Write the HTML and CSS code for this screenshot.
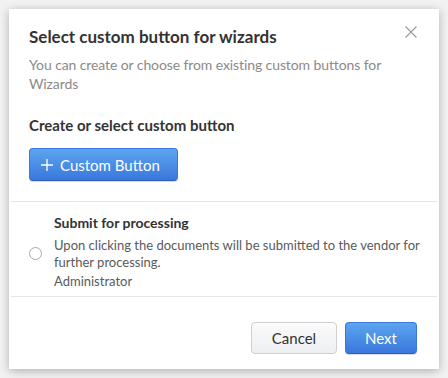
FILE: index.html
```html
<!DOCTYPE html>
<html lang="en">
<head>
    <meta charset="UTF-8">
    <title>Select custom button for wizards</title>
    <link rel="stylesheet" href="styles.css">
</head>
<body>

<div class="dialog">
    <div class="dialog-head">
        <h2>Select custom button for wizards</h2>
        <button class="close-btn" aria-label="Close">
            <svg width="12" height="12" viewBox="0 0 12 12">
                <path d="M0.5 0.5 L11.5 11.5 M11.5 0.5 L0.5 11.5" stroke="#9a9a9a" stroke-width="1.1" fill="none"/>
            </svg>
        </button>
    </div>
    <p class="subtitle">You can create or choose from existing custom buttons for Wizards</p>

    <div class="create-box">
        <h3>Create or select custom button</h3>
        <button class="btn btn-blue btn-custom">
            <svg class="plus" width="12" height="12" viewBox="0 0 12 12">
                <path d="M6 0 V12 M0 6 H12" stroke="white" stroke-width="1.3" fill="none"/>
            </svg>
            Custom Button
        </button>
    </div>

    <div class="divider"></div>

    <!-- existing buttons -->
    <label class="option">
        <span class="radio"></span>
        <span class="option-info">
            <strong>Submit for processing</strong>
            <span class="option-desc">Upon clicking the documents will be submitted to the vendor for further processing.</span>
            <span class="option-role">Administrator</span>
        </span>
    </label>

    <div class="divider"></div>

    <div class="dialog-foot">
        <button class="btn btn-light">Cancel</button>
        <button class="btn btn-blue btn-next">Next</button>
    </div>
</div>

</body>
</html>
```

FILE: styles.css
```css
* {
    margin: 0;
    padding: 0;
    box-sizing: border-box;
}

body {
    font-family: 'Lato', 'Liberation Sans', sans-serif;
    background-color: #f2f2f2;
    padding: 9px;
}

.dialog {
    width: 430px;
    height: 360px;
    background-color: white;
    box-shadow: 0 2px 9px rgba(0, 0, 0, 0.28);
}

.dialog-head {
    display: flex;
    justify-content: space-between;
    align-items: flex-start;
    padding: 17px 22px 0 20px;
}

.dialog-head h2 {
    font-size: 17px;
    font-weight: bold;
    color: #333;
    line-height: 22px;
}

.close-btn {
    background: none;
    border: none;
    margin-top: 0;
    width: 12px;
    height: 12px;
    display: flex;
}

.subtitle {
    font-size: 14px;
    color: #8a8a8a;
    line-height: 19px;
    letter-spacing: -0.1px;
    padding: 7px 40px 0 20px;
}

.create-box {
    padding: 22px 20px 20px;
}

.create-box h3 {
    font-size: 15px;
    font-weight: bold;
    color: #333;
    line-height: 20px;
    margin-bottom: 13px;
}

.btn {
    font-family: 'Lato', 'Liberation Sans', sans-serif;
    font-size: 15px;
    border-radius: 4px;
    height: 33px;
    cursor: pointer;
}

.btn-blue {
    color: white;
    background: linear-gradient(#5ba5f0, #3a77dc);
    border: 1px solid #3b78db;
    border-bottom-color: #2b5eb8;
    box-shadow: 0 1px 1px rgba(0, 0, 0, 0.15);
}

.btn-custom {
    width: 149px;
    display: flex;
    align-items: center;
    padding-left: 11px;
    gap: 7px;
}

.divider {
    height: 1px;
    background-color: #e6e6e6;
    margin: 0 2px;
}

.option {
    display: flex;
    align-items: center;
    padding: 11px 8px 6px 20px;
}

.radio {
    width: 13px;
    height: 13px;
    border: 1px solid #a8a8a8;
    border-radius: 50%;
    margin: 4px 12px 0 0;
    flex-shrink: 0;
}

.option-info {
    display: flex;
    flex-direction: column;
    font-size: 13px;
    color: #5a5a5a;
    line-height: 17px;
}

.option-info strong {
    font-size: 14px;
    color: #333;
    line-height: 20px;
    margin-bottom: 4px;
}

.option-role {
    margin-top: 2px;
}

.dialog-foot {
    display: flex;
    justify-content: flex-end;
    gap: 8px;
    padding: 25px 22px 0;
}

.btn-light {
    width: 86px;
    height: 32px;
    color: #333;
    background: linear-gradient(#fbfbfb, #eeeff2);
    border: 1px solid #cfd0d4;
}

.btn-next {
    width: 72px;
    height: 32px;
}
```
